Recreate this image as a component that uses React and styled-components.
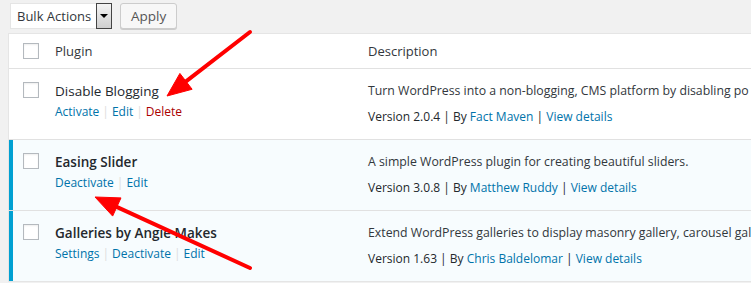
import React from "react";
import styled, { createGlobalStyle } from "styled-components";

const Global = createGlobalStyle`
  html, body { margin: 0; padding: 0; background: #f1f1f1; overflow: hidden; }
  body { font-family: "Open Sans", "Noto Sans", sans-serif; font-size: 13px; color: #32373c; }
  #root { width: 751px; height: 283px; position: relative; overflow: hidden; }
`;

const Toolbar = styled.div`
  display: flex;
  align-items: flex-start;
  gap: 8px;
  padding: 3px 0 0 10px;
  height: 30px;
  box-sizing: border-box;
`;

const Select = styled.div`
  display: flex;
  height: 26px;
  box-sizing: border-box;
  background: #fff;
  border: 1px solid #e5e5e5;
  border-right: none;
`;

const SelectText = styled.span`
  width: 85px;
  padding-left: 6px;
  line-height: 24px;
  font-size: 13px;
  color: #32373c;
  box-sizing: border-box;
`;

const DropButton = styled.span`
  width: 16px;
  height: 26px;
  margin-top: -1px;
  box-sizing: border-box;
  border: 1px solid #444;
  background: linear-gradient(#f4f4f4, #cfcfcf);
  display: flex;
  align-items: center;
  justify-content: center;
  &::after {
    content: "";
    border-left: 4px solid transparent;
    border-right: 4px solid transparent;
    border-top: 4px solid #000;
  }
`;

const Button = styled.button`
  height: 26px;
  padding: 0 10px;
  font-family: inherit;
  font-size: 13.5px;
  color: #555;
  background: #f7f7f7;
  border: 1px solid #ccc;
  border-radius: 3px;
  box-shadow: 0 1px 0 #ccc;
  line-height: 24px;
`;

const Table = styled.div`
  margin-left: 8px;
  margin-top: 3px;
  width: 900px;
  background: #fff;
  border: 1px solid #e5e5e5;
  border-right: none;
`;

const Row = styled.div`
  display: grid;
  grid-template-columns: 36px 313px 1fr;
  height: ${p => (p.$header ? "34px" : "70px")};
  background: ${p => (p.$active ? "#f7fcfe" : "#fff")};
  border-bottom: 1px solid #e1e1e1;
  &:last-child { border-bottom: none; }
`;

const CheckCell = styled.div`
  box-sizing: border-box;
  padding-left: ${p => (p.$active ? "10px" : "14px")};
  padding-top: ${p => (p.$header ? "9px" : "13px")};
  border-left: ${p => (p.$active ? "4px solid #00a0d2" : "none")};
`;

const Box = styled.span`
  display: block;
  width: 16px;
  height: 16px;
  box-sizing: border-box;
  border: 1px solid #b4b9be;
  background: #fff;
  box-shadow: inset 0 1px 2px rgba(0,0,0,0.07);
`;

const HeadCell = styled.div`
  padding-left: 10px;
  line-height: 34px;
  font-size: 13px;
  color: #32373c;
`;

const Cell = styled.div`
  padding: 12px 0 0 10px;
  min-width: 0;
  white-space: nowrap;
  overflow: hidden;
`;

const Name = styled.div`
  line-height: 20px;
  font-size: 13.5px;
  color: #23282d;
  font-weight: ${p => (p.$active ? 600 : 400)};
`;

const Actions = styled.div`
  line-height: 20px;
  margin-top: 1px;
  font-size: 12px;
  display: flex;
  align-items: center;
`;

const Link = styled.a`
  color: ${p => (p.$danger ? "#a00" : "#0073aa")};
  text-decoration: none;
`;

const Sep = styled.span`
  color: #ddd;
  margin: 0 3px;
`;

const Desc = styled.div`
  line-height: 20px;
  font-size: 12.3px;
  color: #32373c;
`;

const Meta = styled.div`
  line-height: 20px;
  margin-top: 6px;
  font-size: 12px;
  color: #23282d;
`;

const Overlay = styled.svg`
  position: absolute;
  left: 0;
  top: 0;
  pointer-events: none;
`;

const plugins = [
  {
    name: "Disable Blogging",
    actions: [["Activate"], ["Edit"], ["Delete", true]],
    desc: "Turn WordPress into a non-blogging, CMS platform by disabling po",
    version: "2.0.4",
    author: "Fact Maven",
  },
  {
    name: "Easing Slider",
    active: true,
    actions: [["Deactivate"], ["Edit"]],
    desc: "A simple WordPress plugin for creating beautiful sliders.",
    version: "3.0.8",
    author: "Matthew Ruddy",
  },
  {
    name: "Galleries by Angie Makes",
    active: true,
    actions: [["Settings"], ["Deactivate"], ["Edit"]],
    desc: "Extend WordPress galleries to display masonry gallery, carousel gal",
    version: "1.63",
    author: "Chris Baldelomar",
  },
];

function Arrow({ x1, y1, x2, y2, len = 24, half = 10 }) {
  const dx = x2 - x1, dy = y2 - y1;
  const L = Math.hypot(dx, dy);
  const ux = dx / L, uy = dy / L;
  const bx = x2 - ux * len, by = y2 - uy * len;
  const px = -uy * half, py = ux * half;
  return (
    <g fill="#f00" stroke="#f00">
      <line x1={x1} y1={y1} x2={bx + ux * 2} y2={by + uy * 2} strokeWidth="4" strokeLinecap="round" />
      <polygon points={`${x2},${y2} ${bx + px},${by + py} ${bx - px},${by - py}`} strokeWidth="1" strokeLinejoin="round" />
    </g>
  );
}

export default function App() {
  return (
    <>
      <Global />
      <Toolbar>
        <Select>
          <SelectText>Bulk Actions</SelectText>
          <DropButton />
        </Select>
        <Button>Apply</Button>
      </Toolbar>
      <Table>
        <Row $header>
          <CheckCell $header><Box /></CheckCell>
          <HeadCell>Plugin</HeadCell>
          <HeadCell>Description</HeadCell>
        </Row>
        {plugins.map(p => (
          <Row key={p.name} $active={p.active}>
            <CheckCell $active={p.active}><Box /></CheckCell>
            <Cell>
              <Name $active={p.active}>{p.name}</Name>
              <Actions>
                {p.actions.map(([label, danger], i) => (
                  <React.Fragment key={label}>
                    {i > 0 && <Sep>|</Sep>}
                    <Link href="#" $danger={danger}>{label}</Link>
                  </React.Fragment>
                ))}
              </Actions>
            </Cell>
            <Cell>
              <Desc>{p.desc}</Desc>
              <Meta>
                Version {p.version} | By <Link href="#">{p.author}</Link> | <Link href="#">View details</Link>
              </Meta>
            </Cell>
          </Row>
        ))}
      </Table>
      <Overlay width="751" height="283" viewBox="0 0 751 283">
        <Arrow x1={250} y1={32} x2={167} y2={96} />
        <Arrow x1={250} y1={268} x2={95} y2={197} />
      </Overlay>
    </>
  );
}
